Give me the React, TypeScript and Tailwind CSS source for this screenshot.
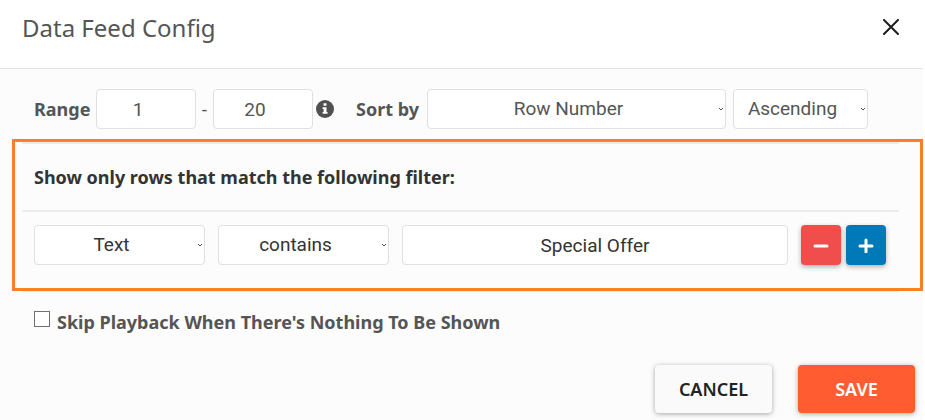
import type { ReactNode } from "react";

const field =
  "h-10 w-full rounded border border-[#dee0e6] bg-white text-center font-[Roboto,sans-serif] text-[19px] outline-none";

function Select({
  label,
  options,
  className,
}: {
  label: string;
  options: string[];
  className: string;
}) {
  return (
    <div className={`relative ${className}`}>
      <select
        aria-label={label}
        className={`${field} appearance-none pr-4 [text-align-last:center]`}
      >
        {options.map((option) => (
          <option key={option}>{option}</option>
        ))}
      </select>
      <svg
        viewBox="0 0 6 4"
        className="pointer-events-none absolute top-[18px] right-[2px] h-1 w-1.5 fill-none stroke-[#555]"
        aria-hidden="true"
      >
        <path d="M1 1l2 2 2-2" />
      </svg>
    </div>
  );
}

function IconButton({
  label,
  color,
  children,
}: {
  label: string;
  color: string;
  children: ReactNode;
}) {
  return (
    <button
      type="button"
      aria-label={label}
      className={`flex size-10 items-center justify-center rounded shadow-[0_2px_5px_rgba(0,0,0,0.3)] ${color}`}
    >
      <svg
        viewBox="0 0 16 16"
        className="size-4 fill-none stroke-white stroke-3"
        strokeLinecap="round"
        aria-hidden="true"
      >
        {children}
      </svg>
    </button>
  );
}

export default function App() {
  return (
    <form className="min-h-screen border-r-2 border-white bg-[#fcfcfc] font-['Noto_Sans',sans-serif] text-lg text-[#555]">
      <header className="flex h-[69px] items-start justify-between border-b border-[#dee2e8] bg-white pt-3 pr-6 pl-[22px]">
        <h1 className="text-2xl">Data Feed Config</h1>
        <button type="button" aria-label="Close" className="mt-[7px]">
          <svg
            viewBox="0 0 16 16"
            className="size-4 fill-none stroke-[#1d1d1d] stroke-2"
            strokeLinecap="round"
            aria-hidden="true"
          >
            <path d="M1 1l14 14M15 1L1 15" />
          </svg>
        </button>
      </header>

      <div className="flex items-center pt-5 pr-[55px] pb-[10px] pl-[34px]">
        <label htmlFor="from" className="w-[62px] font-bold">
          Range
        </label>
        <div className="w-[100px]">
          <input id="from" defaultValue="1" className={`${field} pr-4`} />
        </div>
        <span className="w-[17px] text-center">-</span>
        <div className="w-[100px]">
          <input
            aria-label="Range end"
            defaultValue="20"
            className={`${field} pr-4`}
          />
        </div>
        <svg
          viewBox="0 0 18 18"
          className="mr-[22px] ml-[3px] size-[18px] shrink-0"
          role="img"
          aria-label="Range information"
        >
          <circle cx="9" cy="9" r="9" fill="#505050" />
          <path
            d="M7.5 3.2h3v2.6h-3zM6.6 7.2h3.9v4.8h1v1.8H6.6V12h1V9h-1z"
            fill="#fff"
          />
        </svg>
        <span className="w-[71px] shrink-0 font-bold">Sort by</span>
        <Select
          label="Sort by"
          options={["Row Number", "Text"]}
          className="flex-1"
        />
        <Select
          label="Sort direction"
          options={["Ascending", "Descending"]}
          className="ml-[7px] w-[135px]"
        />
      </div>

      <fieldset className="ml-3 border-[3px] border-[#ff7f27] pr-[21px] pb-[23px] pl-[7px] text-[#333]">
        <h2 className="border-y-2 border-[#ececec] px-3 py-[21px] leading-6 font-bold">
          Show only rows that match the following filter:
        </h2>
        <div className="flex pt-[13px] pr-[13px] pl-3">
          <Select
            label="Filter column"
            options={["Text", "Row Number"]}
            className="w-[171px]"
          />
          <Select
            label="Filter condition"
            options={["contains", "equals"]}
            className="ml-[13px] w-[171px]"
          />
          <div className="mx-[13px] flex-1">
            <input
              aria-label="Filter value"
              defaultValue="Special Offer"
              className={field}
            />
          </div>
          <div className="flex gap-[5px]">
            <IconButton label="Remove filter" color="bg-[#f04e4c]">
              <path d="M2 9h12" />
            </IconButton>
            <IconButton label="Add filter" color="bg-[#0079b8]">
              <path d="M2 9h12M8 3v12" />
            </IconButton>
          </div>
        </div>
      </fieldset>

      <div className="mr-6 ml-[22px] border-t border-[#ececec] px-3 pt-[19px]">
        <label className="flex h-6 items-start gap-[7px] leading-[22px] font-bold">
          <input
            type="checkbox"
            className="size-4 appearance-none border border-[#707070] bg-white checked:bg-[#707070]"
          />
          Skip Playback When There's Nothing To Be Shown
        </label>
      </div>

      <footer className="flex justify-end gap-[26px] pt-[30px] pr-2 pb-[7px] font-semibold">
        <button
          type="button"
          className="h-12 w-[117px] rounded bg-[#fafafa] text-[#222] shadow-[0_1px_5px_rgba(0,0,0,0.35)]"
        >
          CANCEL
        </button>
        <button
          type="submit"
          className="h-12 w-[117px] rounded bg-[#ff5c32] text-white shadow-[0_1px_5px_rgba(0,0,0,0.35)]"
        >
          SAVE
        </button>
      </footer>
    </form>
  );
}
